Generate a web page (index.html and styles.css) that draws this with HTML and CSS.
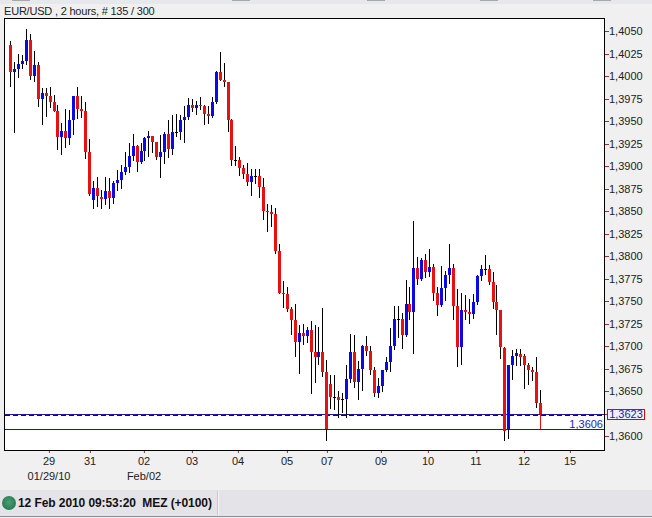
FILE: index.html
```html
<!DOCTYPE html>
<html lang="en">
<head>
    <meta charset="UTF-8">
    <title>EUR/USD , 2 hours</title>
    <link rel="stylesheet" href="styles.css">
</head>
<body>

    <div class="toolbar-strip">
        <span class="strip-btn strip-btn-1"></span>
        <span class="strip-btn strip-btn-2"></span>
        <span class="strip-btn strip-btn-3"></span>
        <span class="strip-btn strip-btn-4"></span>
        <span class="strip-btn strip-btn-5"></span>
    </div>

    <div class="chart-title">EUR/USD , 2 hours, # 135 / 300</div>

    <div class="chart-row">
        <div class="plot">
            <svg id="candles" class="candles" width="599" height="431"></svg>
            <span class="last-label">1,3606</span>
        </div>
        <div class="price-axis" id="priceAxis">
            <span class="current-price">1,3623</span>
        </div>
    </div>

    <div class="date-axis" id="dateAxis"></div>

    <div class="status-bar">
        <span class="status-led"></span>
        <span class="status-time">12 Feb 2010 09:53:20&nbsp; MEZ (+0100)</span>
        <span class="status-sep"></span>
    </div>

    <script src="chart.js"></script>
</body>
</html>
```
FILE: styles.css
```css
html, body {
    margin: 0;
    padding: 0;
}

body {
    width: 652px;
    height: 518px;
    overflow: hidden;
    background-color: #f0f0f0;
    font-family: "Liberation Sans", Arial, sans-serif;
    font-size: 11px;
    color: #222;
}

.toolbar-strip {
    display: flex;
    height: 4px;
    background-color: #e6e8ec;
}

.strip-btn {
    width: 18px;
    height: 1px;
    background-color: #a8a8a8;
}

.strip-btn-1 {
    margin-left: 12px;
}

.strip-btn-2 {
    margin-left: 202px;
}

.strip-btn-3 {
    margin-left: 117px;
}

.strip-btn-4 {
    margin-left: 95px;
}

.strip-btn-5 {
    margin-left: 95px;
}

.chart-title {
    height: 14px;
    line-height: 14px;
    padding-left: 4px;
    font-size: 11px;
    letter-spacing: -0.2px;
    color: #222;
}

.chart-row {
    display: flex;
    padding-left: 4px;
}

.plot {
    position: relative;
    width: 599px;
    height: 431px;
    background-color: #fff;
    border: 1px solid #000;
}

.candles {
    display: block;
}

.last-label {
    position: absolute;
    right: 1px;
    top: 399px;
    font-size: 11px;
    line-height: 12px;
    color: #1a1ac0;
}

.price-axis {
    position: relative;
    flex: 1;
}

.tick-label {
    position: absolute;
    left: 4px;
    line-height: 12px;
    transform: translateY(-6px);
    white-space: nowrap;
}

.tick-label::before {
    content: "";
    position: absolute;
    left: -4px;
    top: 6px;
    width: 4px;
    height: 1px;
    background-color: #a03030;
}

.current-price {
    position: absolute;
    left: 2px;
    top: 391px;
    width: 36px;
    height: 9px;
    line-height: 9px;
    border: 1px solid #e00000;
    text-align: center;
    color: #1a1ac0;
    background-color: #f0f0f0;
    z-index: 1;
}

.date-axis {
    position: relative;
    height: 39px;
    font-size: 11px;
}

.date-tick {
    position: absolute;
    top: 4px;
    transform: translateX(-50%);
}

.date-tick::before {
    content: "";
    position: absolute;
    left: 50%;
    top: -4px;
    width: 1px;
    height: 2px;
    background-color: #a03030;
}

.date-sub {
    position: absolute;
    top: 19px;
    transform: translateX(-50%);
}

.status-bar {
    display: flex;
    align-items: center;
    height: 26px;
    background-color: #e3e3e8;
    border-bottom: 1px solid #8c8c9a;
    padding-left: 2px;
}

.status-led {
    width: 14px;
    height: 14px;
    border-radius: 50%;
    background: radial-gradient(circle at 50% 45%, #4aa070, #1d6e48);
}

.status-time {
    margin-left: 2px;
    font-size: 12px;
    font-weight: bold;
    letter-spacing: -0.08px;
    color: #111;
    white-space: nowrap;
}

.status-sep {
    margin-left: 5px;
    width: 1px;
    height: 24px;
    background-color: #c8c8ce;
    box-shadow: 1px 0 0 #f4f4f8;
}
```
FILE: chart.js
```js
// [wickTop, wickBottom, bodyTop, bodyBottom, colour]  r = red, b = blue, k = doji
const bars = [
    [41,87,45,72,'r'],[62,133,69,72,'b'],[54,78,64,69,'b'],[55,69,61,64,'b'],[29,65,40,61,'b'],
    [34,80,40,76,'r'],[51,82,65,76,'b'],[62,107,65,99,'r'],[88,125,93,99,'b'],[88,117,93,96,'r'],
    [87,108,96,102,'r'],[95,112,102,111,'r'],[105,150,111,137,'r'],[123,155,131,137,'b'],[109,148,131,138,'r'],
    [110,145,120,138,'b'],[96,135,96,120,'b'],[87,119,96,109,'r'],[96,118,109,111,'r'],[102,159,111,152,'r'],
    [139,196,152,194,'r'],[181,209,188,200,'b'],[177,207,188,196,'r'],[190,209,197,199,'r'],[177,205,191,199,'b'],
    [178,209,191,198,'r'],[181,204,183,198,'b'],[170,191,180,183,'b'],[165,189,172,180,'b'],[152,175,167,172,'b'],
    [143,173,156,167,'b'],[134,161,146,156,'b'],[145,172,146,162,'r'],[143,164,151,162,'b'],[137,161,138,151,'b'],
    [131,157,136,138,'b'],[136,153,136,142,'r'],[142,160,142,157,'r'],[135,178,152,157,'b'],[132,164,134,152,'b'],
    [120,158,134,149,'r'],[115,155,132,149,'b'],[114,137,132,132,'k'],[115,140,120,132,'b'],[106,143,117,120,'b'],
    [98,120,105,117,'b'],[99,112,105,108,'r'],[101,115,105,108,'b'],[97,110,105,106,'r'],[105,125,106,114,'r'],
    [106,124,114,116,'r'],[97,118,102,116,'b'],[71,104,72,102,'b'],[52,81,72,80,'r'],[63,87,80,82,'r'],
    [82,132,82,120,'r'],[119,166,120,160,'r'],[146,166,160,160,'k'],[157,176,160,168,'r'],[165,179,168,174,'r'],
    [163,186,174,182,'r'],[169,196,176,182,'b'],[169,184,176,176,'k'],[169,198,176,187,'r'],[178,220,187,211,'r'],
    [204,232,211,212,'r'],[205,227,212,214,'r'],[208,254,214,251,'r'],[244,294,251,293,'r'],[281,308,293,294,'r'],
    [287,312,294,309,'r'],[307,335,309,320,'r'],[304,357,320,342,'r'],[325,374,333,342,'b'],[324,345,333,336,'r'],
    [327,343,330,336,'b'],[321,394,330,352,'r'],[325,383,352,357,'r'],[327,365,352,357,'b'],[308,377,352,372,'r'],
    [360,441,372,429,'r'],[375,409,384,397,'r'],[375,410,397,397,'k'],[391,418,397,400,'r'],[393,413,399,399,'k'],
    [365,418,379,399,'b'],[334,383,352,379,'b'],[335,388,352,382,'r'],[361,400,369,382,'b'],[345,391,346,369,'b'],
    [336,356,346,351,'r'],[346,375,351,370,'r'],[367,397,370,393,'r'],[378,398,386,393,'b'],[370,392,370,386,'b'],
    [357,372,362,370,'b'],[328,372,346,362,'b'],[306,350,319,346,'b'],[306,338,319,319,'k'],[313,349,319,335,'r'],
    [280,337,304,335,'b'],[287,320,304,312,'r'],[221,354,268,312,'b'],[257,285,268,279,'r'],[258,281,260,279,'b'],
    [254,278,260,272,'r'],[249,277,267,272,'b'],[264,301,267,293,'r'],[287,316,293,305,'r'],[266,307,288,305,'b'],
    [271,301,275,288,'b'],[244,284,268,275,'b'],[264,320,268,306,'r'],[289,367,306,347,'r'],[293,365,310,347,'b'],
    [295,320,310,312,'r'],[299,324,312,314,'r'],[294,319,302,314,'b'],[275,305,276,302,'b'],[265,281,269,276,'b'],
    [255,275,269,269,'k'],[265,285,269,282,'r'],[272,309,282,302,'r'],[285,335,302,310,'r'],[310,359,310,347,'r'],
    [347,441,348,431,'r'],[365,439,365,429,'b'],[350,380,356,365,'b'],[349,366,353,356,'b'],[349,366,354,357,'r'],
    [354,389,356,365,'r'],[363,385,365,370,'r'],[367,381,370,372,'r'],[357,408,372,403,'r'],[390,429,403,414,'r']
];

const colours = { r: '#e81010', b: '#0a0ae8', k: '#000' };

// plot origin on the page, the svg starts just inside the border
const originX = 5;
const originY = 19;

const svg = document.getElementById('candles');

function addRect(x, y, w, h, fill) {
    const r = document.createElementNS('http://www.w3.org/2000/svg', 'rect');
    r.setAttribute('x', x);
    r.setAttribute('y', y);
    r.setAttribute('width', w);
    r.setAttribute('height', h);
    r.setAttribute('fill', fill);
    svg.appendChild(r);
}

// Current price and last price lines
addRect(0, 414 - originY, 599, 1, '#1a1a9a');
for (let x = 0; x < 599; x += 8) {
    addRect(x, 415 - originY, 5, 1, '#101050');
}
addRect(0, 429 - originY, 599, 1, '#1a1a9a');

bars.forEach((bar, i) => {
    const x = Math.round(10 + i * 3.955) - originX;
    const [wickTop, wickBottom, bodyTop, bodyBottom, colour] = bar;
    addRect(x, wickTop - originY, 1, wickBottom - wickTop, '#000');
    if (colour === 'k') {
        addRect(x - 1, bodyTop - originY, 3, 1, '#000');
    } else {
        addRect(x - 1, bodyTop - originY, 3, Math.max(bodyBottom - bodyTop, 1), colours[colour]);
    }
    // last bar's lower wick runs down in red
    if (i === bars.length - 1) {
        addRect(x, bodyBottom - originY, 1, wickBottom - bodyBottom, colours.r);
    }
});

// Price axis, 1,4050 down to 1,3600 every 25 points
const priceAxis = document.getElementById('priceAxis');
for (let i = 0; i <= 18; i++) {
    const label = (1.405 - i * 0.0025).toFixed(4).replace('.', ',');
    const tick = document.createElement('span');
    tick.className = 'tick-label';
    tick.textContent = label;
    tick.style.top = Math.round(31 + i * 22.5 - 18) + 'px';
    priceAxis.appendChild(tick);
}

// Date axis
const dateAxis = document.getElementById('dateAxis');
[[49,'29'],[90,'31'],[144,'02'],[192,'03'],[238,'04'],[287,'05'],[327,'07'],[381,'09'],[428,'10'],[476,'11'],[524,'12'],[570,'15']].forEach(([x, text]) => {
    const tick = document.createElement('span');
    tick.className = 'date-tick';
    tick.textContent = text;
    tick.style.left = x + 'px';
    dateAxis.appendChild(tick);
});
[[49,'01/29/10'],[144,'Feb/02']].forEach(([x, text]) => {
    const sub = document.createElement('span');
    sub.className = 'date-sub';
    sub.textContent = text;
    sub.style.left = x + 'px';
    dateAxis.appendChild(sub);
});
```
